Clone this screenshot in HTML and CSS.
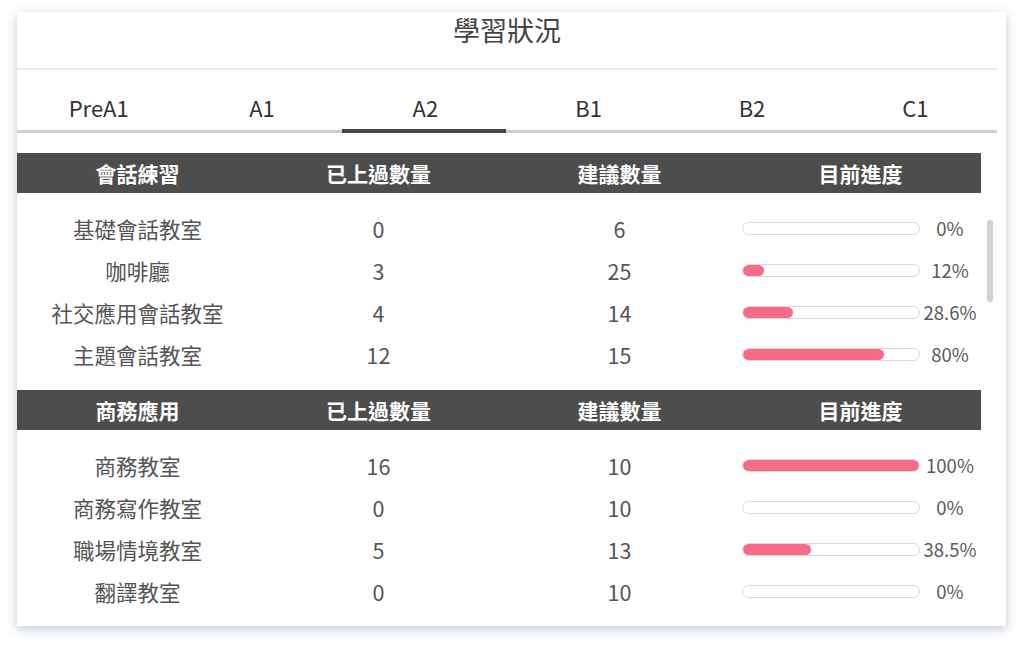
FILE: index.html
```html
<!DOCTYPE html>
<html lang="zh-Hant">
<head>
<meta charset="utf-8">
<title>學習狀況</title>
<link rel="stylesheet" href="styles.css">
</head>
<body>
<div class="card">
  <div class="inner">
    <h1 class="title">學習狀況</h1>
    <nav class="tabs">
      <div class="tab">PreA1</div>
      <div class="tab">A1</div>
      <div class="tab active">A2</div>
      <div class="tab">B1</div>
      <div class="tab">B2</div>
      <div class="tab">C1</div>
    </nav>
    <div class="scroll">
      <section class="group">
        <div class="row head"><div>會話練習</div><div>已上過數量</div><div>建議數量</div><div>目前進度</div></div>
        <div class="rows">
          <div class="row"><div>基礎會話教室</div><div>0</div><div>6</div><div class="prog"><span class="bar"><span class="fill" style="width:0%"></span></span><span class="pct">0%</span></div></div>
          <div class="row"><div>咖啡廳</div><div>3</div><div>25</div><div class="prog"><span class="bar"><span class="fill" style="width:12%"></span></span><span class="pct">12%</span></div></div>
          <div class="row"><div>社交應用會話教室</div><div>4</div><div>14</div><div class="prog"><span class="bar"><span class="fill" style="width:28.6%"></span></span><span class="pct">28.6%</span></div></div>
          <div class="row"><div>主題會話教室</div><div>12</div><div>15</div><div class="prog"><span class="bar"><span class="fill" style="width:80%"></span></span><span class="pct">80%</span></div></div>
        </div>
      </section>
      <section class="group">
        <div class="row head"><div>商務應用</div><div>已上過數量</div><div>建議數量</div><div>目前進度</div></div>
        <div class="rows">
          <div class="row"><div>商務教室</div><div>16</div><div>10</div><div class="prog"><span class="bar"><span class="fill" style="width:100%"></span></span><span class="pct">100%</span></div></div>
          <div class="row"><div>商務寫作教室</div><div>0</div><div>10</div><div class="prog"><span class="bar"><span class="fill" style="width:0%"></span></span><span class="pct">0%</span></div></div>
          <div class="row"><div>職場情境教室</div><div>5</div><div>13</div><div class="prog"><span class="bar"><span class="fill" style="width:38.5%"></span></span><span class="pct">38.5%</span></div></div>
          <div class="row"><div>翻譯教室</div><div>0</div><div>10</div><div class="prog"><span class="bar"><span class="fill" style="width:0%"></span></span><span class="pct">0%</span></div></div>
        </div>
      </section>
      <div class="thumb"></div>
    </div>
  </div>
</div>
</body>
</html>
```

FILE: styles.css
```css
html, body {
  margin: 0;
  padding: 0;
  background: #fff;
}
body {
  font-family: "Noto Sans CJK TC", "Noto Sans", sans-serif;
  color: #555;
  width: 1024px;
  height: 647px;
  overflow: hidden;
  padding-top: 12px;
  box-sizing: border-box;
}
.card {
  margin: 0 0 0 17px;
  width: 989px;
  height: 614px;
  background: #fff;
  box-shadow: 0 3px 10px rgba(110, 130, 165, 0.45);
}
.inner {
  width: 980px;
}
.title {
  margin: 0;
  height: 56px;
  padding-top: 0;
  line-height: 36px;
  font-size: 27px;
  font-weight: 400;
  color: #444;
  text-align: center;
  border-bottom: 2px solid #eaeaea;
}
.tabs {
  display: grid;
  grid-template-columns: repeat(6, 1fr);
  border-bottom: 3px solid #cfcfcf;
  height: 60px;
}
.tab {
  font-size: 22px;
  color: #333;
  text-align: center;
  line-height: 22px;
  padding-top: 26px;
  position: relative;
}
.tab.active::after {
  content: "";
  position: absolute;
  left: -2px;
  right: 1px;
  bottom: -3px;
  height: 4px;
  background: #474747;
}
.scroll {
  position: relative;
  padding-top: 20px;
  width: 964px;
}
.group {
  margin-bottom: 15px;
}
.row {
  display: grid;
  grid-template-columns: repeat(4, 1fr);
  height: 42px;
  align-items: center;
  font-size: 21.5px;
  text-align: center;
}
.row.head {
  height: 40px;
  background: #4d4d4d;
  color: #fff;
  font-weight: 700;
  font-size: 21px;
}
.rows {
  padding-top: 14px;
}
.prog {
  display: flex;
  align-items: center;
  padding-left: 2px;
}
.bar {
  width: 176px;
  height: 11px;
  border: 1px solid #d9d9d9;
  border-radius: 7px;
  background: #fff;
  display: block;
  overflow: hidden;
  flex: none;
}
.fill {
  display: block;
  height: 100%;
  background: #f76b86;
  border-radius: 7px;
}
.pct {
  width: 62px;
  text-align: center;
  font-size: 18.5px;
  margin-left: -1px;
  color: #5a5a5a;
}
.thumb {
  position: absolute;
  left: 970px;
  top: 87px;
  width: 6px;
  height: 82px;
  border-radius: 3px;
  background: #d2d2d2;
}
```
